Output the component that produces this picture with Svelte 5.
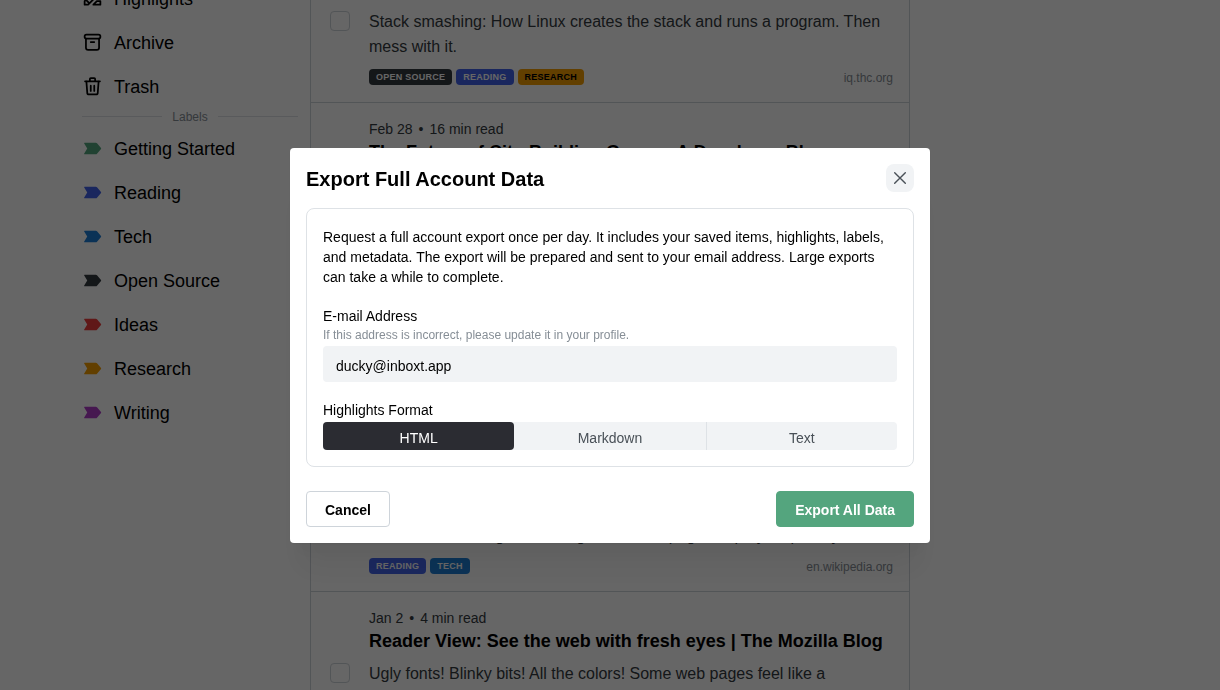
<script>
	const labels = [
		{ name: 'Getting Started', color: '#54a57e' },
		{ name: 'Reading', color: '#4263eb' },
		{ name: 'Tech', color: '#1c7ed6' },
		{ name: 'Open Source', color: '#343a40' },
		{ name: 'Ideas', color: '#f03e3e' },
		{ name: 'Research', color: '#f59f00' },
		{ name: 'Writing', color: '#ae3ec9' }
	];

	const tagColors = Object.fromEntries(labels.map((l) => [l.name, l.color]));

	const articles = [
		{
			date: 'Mar 4',
			time: '12 min read',
			title: 'Smashing the Stack',
			text: 'Stack smashing: How Linux creates the stack and runs a program. Then mess with it.',
			tags: ['Open Source', 'Reading', 'Research'],
			site: 'iq.thc.org'
		},
		{
			date: 'Feb 28',
			time: '16 min read',
			title: 'The Future of City-Building Games: A Developer Blog',
			text: 'What comes next for games about planning, building and living in the cities of tomorrow.',
			tags: ['Reading'],
			site: 'medium.com'
		},
		{
			date: 'Feb 3',
			time: '5 min read',
			title: 'Notes on reading',
			text: 'A short collection of notes on how we read on screens, and what makes a text stay with us.',
			tags: ['Ideas'],
			site: 'inboxt.app'
		},
		{
			date: 'Jan 15',
			time: '8 min read',
			title: 'Rubber duck debugging',
			text: 'In software engineering, rubber duck debugging is a way to find and fix errors when writing, or reading, code on a page, step by step, for your app.',
			tags: ['Reading', 'Tech'],
			site: 'en.wikipedia.org'
		},
		{
			date: 'Jan 2',
			time: '4 min read',
			title: 'Reader View: See the web with fresh eyes | The Mozilla Blog',
			text: 'Ugly fonts! Blinky bits! All the colors! Some web pages feel like a battleground of distractions.',
			tags: ['Reading'],
			site: 'blog.mozilla.org'
		}
	];

	const formats = ['HTML', 'Markdown', 'Text'];

	let open = $state(true);
	let format = $state('HTML');
	let email = $state('ducky@inboxt.app');
</script>

<div class="page">
	<div class="shell">
		<nav class="sidebar">
			<a href="#highlights" class="nav-item">
				<svg viewBox="0 0 24 24" class="icon">
					<path d="M3 19h4L17.500 8.500a2.800 2.800 0 1 0-4-4L3 15v4M12.500 5.500l4 4M4.500 13.500l4 4M21 15v4h-8l4-4z" />
				</svg>
				<span>Highlights</span>
			</a>
			<a href="#archive" class="nav-item">
				<svg viewBox="0 0 24 24" class="icon">
					<rect x="3" y="3" width="18" height="4.500" rx="2" />
					<path d="M4.500 7.500V18a2.500 2.500 0 0 0 2.500 2.500h10a2.500 2.500 0 0 0 2.500-2.500V7.500M10 11.500h4" />
				</svg>
				<span>Archive</span>
			</a>
			<a href="#trash" class="nav-item">
				<svg viewBox="0 0 24 24" class="icon">
					<path d="M3.500 6h17M5 6l1 13a2 2 0 0 0 2 2h8a2 2 0 0 0 2-2l1-13M9 6V3.500a1 1 0 0 1 1-1h4a1 1 0 0 1 1 1V6M10 11v6M14 11v6" />
				</svg>
				<span>Trash</span>
			</a>
			<div class="divider">Labels</div>
			{#each labels as label (label.name)}
				<a href="#label" class="nav-item">
					<svg viewBox="0 0 20 20" class="marker">
						<path
							d="M2.500 4.500h10.700a1.500 1.500 0 0 1 1.100.5l3.800 4.600a.7.7 0 0 1 0 .8l-3.800 4.600a1.500 1.500 0 0 1-1.100.5H2.500a.5.5 0 0 1-.4-.8L5 10 2.100 5.300a.5.5 0 0 1 .4-.8z"
							fill={label.color}
						/>
					</svg>
					<span>{label.name}</span>
				</a>
			{/each}
		</nav>

		<main class="feed">
			{#each articles as article (article.title)}
				<article>
					<input type="checkbox" aria-label="Select {article.title}" />
					<div class="body">
						<div class="meta">{article.date}<span>•</span>{article.time}</div>
						<h2>{article.title}</h2>
						<p>{article.text}</p>
						<footer>
							{#each article.tags as tag (tag)}
								<span class="tag" class:dark-text={tag === 'Research'} style="background: {tagColors[tag]}">{tag}</span>
							{/each}
							<a href="#site" class="site">{article.site}</a>
						</footer>
					</div>
				</article>
			{/each}
		</main>
	</div>
</div>

{#if open}
	<div class="overlay">
		<div class="modal" role="dialog" aria-modal="true" aria-labelledby="modal-title">
			<header>
				<h1 id="modal-title">Export Full Account Data</h1>
				<button class="close" aria-label="Close" onclick={() => (open = false)}>
					<svg viewBox="0 0 16 16"><path d="M2.700 2.700l10.600 10.600M13.300 2.700l-10.600 10.600" /></svg>
				</button>
			</header>

			<div class="card">
				<p class="intro">
					Request a full account export once per day. It includes your saved items, highlights, labels, and
					metadata. The export will be prepared and sent to your email address. Large exports can take a while
					to complete.
				</p>

				<div class="field">
					<label for="email">E-mail Address</label>
					<small id="email-hint">If this address is incorrect, please update it in your profile.</small>
					<input id="email" type="email" aria-describedby="email-hint" readonly bind:value={email} />
				</div>

				<fieldset class="field">
					<legend>Highlights Format</legend>
					<div class="segments">
						{#each formats as item (item)}
							<label class:active={format === item}>
								<input type="radio" name="format" value={item} bind:group={format} />
								{item}
							</label>
						{/each}
					</div>
				</fieldset>
			</div>

			<div class="actions">
				<button class="btn" onclick={() => (open = false)}>Cancel</button>
				<button class="btn primary">Export All Data</button>
			</div>
		</div>
	</div>
{/if}

<style>
	:global(body) {
		font-family: Helvetica, 'Liberation Sans', Arial, sans-serif;
		color: #000;
		background: #fff;
	}

	.page {
		height: 100vh;
		overflow: hidden;
	}

	/* the list is scrolled down a little */
	.shell {
		display: grid;
		grid-template-columns: 1fr minmax(0, 600px) 1fr;
		margin-top: -61px;
	}

	.sidebar {
		justify-self: end;
		width: 216px;
		padding: 37px 12px 0 0;
	}

	.nav-item {
		display: flex;
		align-items: center;
		gap: 11px;
		height: 44px;
		font-size: 18px;
		color: #000;
		text-decoration: none;
	}

	.nav-item span {
		padding-top: 2px;
	}

	.icon,
	.marker {
		width: 21px;
		height: 21px;
	}

	.icon {
		fill: none;
		stroke: currentColor;
		stroke-width: 2;
		stroke-linecap: round;
		stroke-linejoin: round;
	}

	.divider {
		display: flex;
		align-items: center;
		gap: 10px;
		height: 17px;
		margin-bottom: 1px;
		font-size: 12px;
		color: #868e96;
	}

	.divider::before,
	.divider::after {
		content: '';
		flex: 1;
		border-top: 1px solid #dee2e6;
	}

	.feed {
		border: 1px solid #ced4da;
		border-width: 0 1px;
	}

	article {
		display: flex;
		align-items: center;
		gap: 19px;
		padding: 16px 16px 16px 19px;
		border-top: 1px solid #ced4da;
	}

	article input {
		appearance: none;
		flex: none;
		width: 20px;
		height: 20px;
		margin: 0;
		border: 1px solid #ced4da;
		border-radius: 4px;
	}

	.body {
		flex: 1;
		min-width: 0;
	}

	.meta {
		font-size: 14px;
		line-height: 20px;
		color: #343a40;
	}

	.meta span {
		margin: 0 6px;
	}

	h2 {
		margin: 0 0 7px;
		font-size: 18px;
		line-height: 26px;
		white-space: nowrap;
	}

	article p {
		display: -webkit-box;
		-webkit-box-orient: vertical;
		-webkit-line-clamp: 2;
		line-clamp: 2;
		overflow: hidden;
		margin: 0 0 9px;
		font-size: 16px;
		line-height: 25px;
		color: #343a40;
	}

	article footer {
		display: flex;
		align-items: center;
		gap: 4px;
		height: 18px;
	}

	.tag {
		padding: 0 7px;
		border-radius: 4px;
		font-size: 9px;
		font-weight: 700;
		line-height: 16px;
		letter-spacing: 0.25px;
		text-transform: uppercase;
		color: #fff;
	}

	.tag.dark-text {
		color: #000;
	}

	.site {
		margin-left: auto;
		padding-top: 2px;
		font-size: 12px;
		color: #868e96;
		text-decoration: none;
	}

	.overlay {
		position: fixed;
		inset: 0;
		display: flex;
		align-items: center;
		justify-content: center;
		background: rgba(0, 0, 0, 0.6);
	}

	.modal {
		box-sizing: border-box;
		width: 640px;
		max-width: 100%;
		padding: 16px;
		border-radius: 4px;
		background: #fff;
		box-shadow:
			0 1px 3px rgba(0, 0, 0, 0.05),
			0 36px 28px -7px rgba(0, 0, 0, 0.05),
			0 17px 17px -7px rgba(0, 0, 0, 0.04);
	}

	header {
		display: flex;
		align-items: center;
		justify-content: space-between;
		margin-bottom: 16px;
	}

	h1 {
		margin: 0;
		padding-top: 2px;
		font-size: 20px;
		line-height: 26px;
	}

	.close {
		display: grid;
		place-items: center;
		width: 28px;
		height: 28px;
		padding: 0;
		border: 0;
		border-radius: 8px;
		background: #f1f3f5;
	}

	.close svg {
		width: 16px;
		height: 16px;
		stroke: #495057;
		stroke-width: 1.4;
		stroke-linecap: round;
	}

	.card {
		padding: 18px 16px 16px;
		border: 1px solid #dee2e6;
		border-radius: 8px;
		font-size: 14px;
		line-height: 20px;
	}

	.intro {
		margin: 0 0 19px;
	}

	.field {
		display: flex;
		flex-direction: column;
		margin: 0;
		padding: 0;
		border: 0;
	}

	.field + .field {
		margin-top: 18px;
	}

	legend {
		padding: 0;
	}

	small {
		margin-bottom: 2px;
		font-size: 12px;
		line-height: 18px;
		color: #868e96;
	}

	#email {
		height: 36px;
		box-sizing: border-box;
		padding: 4px 13px 0;
		border: 0;
		border-radius: 4px;
		background: #f1f3f5;
		font: inherit;
		color: #000;
	}

	.segments {
		display: grid;
		grid-template-columns: repeat(3, 1fr);
		margin-top: 2px;
		border-radius: 4px;
		background: #f1f3f5;
	}

	.segments label {
		padding: 6px 0 2px;
		text-align: center;
		color: #495057;
	}

	.segments label:last-child {
		border-left: 1px solid #dee2e6;
	}

	.segments label.active {
		border-radius: 4px;
		background: #2b2c32;
		color: #fff;
	}

	.segments input {
		position: absolute;
		appearance: none;
		margin: 0;
	}

	.actions {
		display: flex;
		justify-content: space-between;
		margin-top: 24px;
	}

	.btn {
		height: 36px;
		padding: 3px 18px 0;
		border: 1px solid #ced4da;
		border-radius: 4px;
		background: #fff;
		font: 700 14px Helvetica, 'Liberation Sans', Arial, sans-serif;
		color: #000;
	}

	.btn.primary {
		border-color: #54a57e;
		background: #54a57e;
		color: #fff;
	}
</style>
